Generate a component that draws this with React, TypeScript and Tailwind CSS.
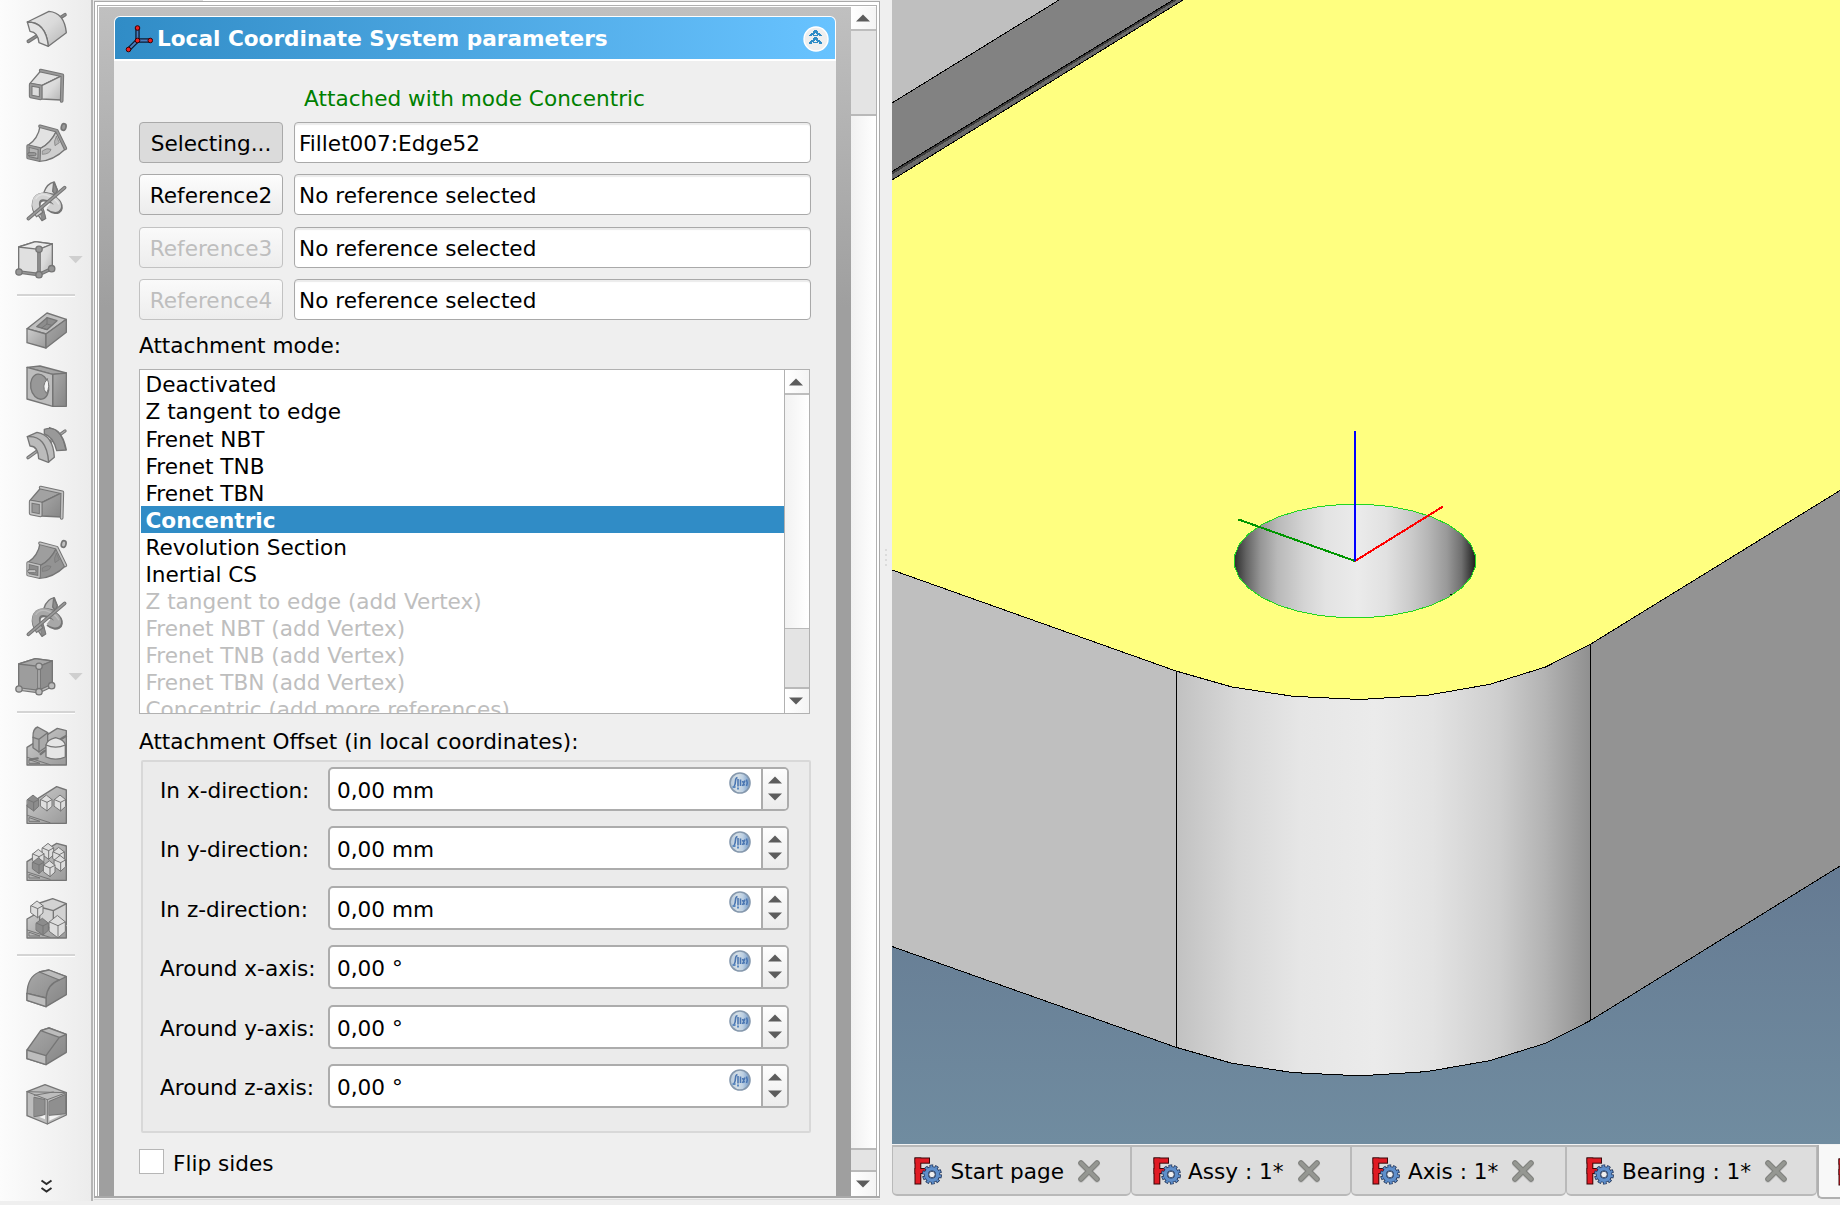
import React, { type ReactNode } from "react";

const INK = "#757575";

/* ---------- toolbar ---------- */

// Toolbar drawings use three units per pixel down the whole column.
function Tool({ top, h, children }: { top: number; h: number; children: ReactNode }) {
  return (
    <svg
      width="91"
      height={h}
      viewBox={`0 ${top * 3} 273 ${h * 3}`}
      className="block shrink-0"
      fill="none"
      stroke={INK}
      strokeWidth="4"
      strokeLinejoin="round"
      strokeLinecap="round"
    >
      {children}
    </svg>
  );
}

function ToolRule({ className }: { className: string }) {
  return (
    <div className={`shrink-0 pl-[17px] ${className}`}>
      <div className="h-[3px] w-[58px] border-b border-white bg-[#d4d4d4]" />
    </div>
  );
}

function Loft({ a, b, c, rim }: { a: string; b: string; c: string; rim: string }) {
  return (
    <>
      <path d="M90 250 L122 213 L186 227 L125 257Z" fill={a} />
      <path d="M125 257 L186 227 L184 300 L125 297Z" fill={b} />
      <path d="M122 212 L187 226 L185 303" stroke={INK} strokeWidth="11" />
      <path d="M122 212 L187 226 L185 303" stroke={rim} strokeWidth="5" />
      <path d="M92 254 L122 259 L122 295 L92 289Z" fill={c} strokeWidth="11" />
      <path d="M92 254 L122 259 L122 295 L92 289Z" stroke={rim} strokeWidth="5" />
    </>
  );
}

function Sweep({ a, b, c, rim }: { a: string; b: string; c: string; rim: string }) {
  return (
    <>
      <path d="M120 379 L170 392 Q152 430 122 445 L84 436 Q115 415 120 379Z" fill={a} />
      <path d="M170 392 L197 446 Q160 482 118 484 L120 446 Q152 430 170 392Z" fill={b} />
      <path d="M169 409 L178 428 L165 437 Q160 425 169 409Z M128 452 Q142 442 153 448 Q150 462 128 463Z" fill={c} strokeWidth="2" />
      <path d="M120 379 L170 392 L196 445" strokeWidth="11" />
      <path d="M120 379 L170 392 L196 445" stroke={rim} strokeWidth="5" />
      <path d="M84 438 L118 446 L117 480 L84 473Z" fill={c} strokeWidth="10" />
      <path d="M84 438 L118 446 L117 480 L84 473Z" stroke={rim} strokeWidth="4.5" />
      <rect x="83" y="458" width="25" height="9" rx="4" fill={rim} strokeWidth="3" />
      <ellipse cx="191" cy="381" rx="7" ry="10" transform="rotate(15 191 381)" fill={rim} strokeWidth="5" />
    </>
  );
}

function Helix({ a, b }: { a: string; b: string }) {
  const band = "M118 642 C98 614 106 589 128 588 C152 587 174 606 173 620 C172 629 158 627 146 617";
  return (
    <>
      <path d="M132 577 Q141 550 163 546 L172 570 L166 584 Z" fill={b} />
      <path d="M161 547 L172 570 L166 584 L158 574Z" fill="#8c8c8c" />
      <path d="M104 630 L126 662 L137 655 L128 622Z" fill={b} />
      <path d="M119 632 L126 661 L137 655 L131 630Z" fill="#8c8c8c" strokeWidth="2" />
      <path d={band} strokeWidth="27" strokeLinecap="butt" transform="translate(2 3)" />
      <path d={band} stroke={a} strokeWidth="20" strokeLinecap="butt" />
      <path d="M108 596 Q118 580 138 585 Q166 594 176 612" stroke={b} strokeWidth="4" />
      <path d="M85 656 L194 563" strokeWidth="11" />
      <path d="M85 656 L194 563" stroke="#9a9a9a" strokeWidth="4.5" />
    </>
  );
}

function Primitive({ a, b, c, rim }: { a: string; b: string; c: string; rim: string }) {
  return (
    <>
      <path d="M56 741 L106 725 L157 732 L157 804 L117 822 L56 815Z" fill={a} />
      <path d="M56 741 L106 725 L157 732 L117 748Z" fill={b} />
      <path d="M117 748 L157 732 L157 804 L117 822Z" fill={c} />
      <path d="M117 748 V823 M57 816 L117 824 L155 806" strokeWidth="11" />
      <path d="M117 748 V823 M57 816 L117 824 L155 806" stroke={rim} strokeWidth="4" />
      {[[117, 748], [57, 816], [117, 824], [155, 806]].map(([x, y]) => (
        <circle key={`${x}-${y}`} cx={x} cy={y} r="9.5" fill={rim} />
      ))}
      <path d="M206 768 H248 L227 790Z" fill="#cfcfcf" stroke="none" />
    </>
  );
}

function Cube({ x, y, s, dark }: { x: number; y: number; s: number; dark?: boolean }) {
  const w = s / 2;
  const d = s * 0.2;
  return (
    <g strokeWidth="3">
      <path
        d={`M${x - w} ${y - w + d} L${x} ${y - w - d} L${x + w} ${y - w + d} V${y + w - d} L${x + 2} ${y + w + d} L${x - w} ${y + w - d}Z`}
        fill={dark ? "#8c8c8c" : "#dedede"}
      />
      <path d={`M${x - w} ${y - w + d} L${x + 2} ${y - w + d * 2.2} L${x + w} ${y - w + d} M${x + 2} ${y - w + d * 2.2} V${y + w + d}`} />
    </g>
  );
}

function Ground({ y, d }: { y: number; d: string }) {
  return (
    <>
      <path d={d} fill="url(#tb-mid)" />
      <path d={`M82 ${y - 25} L150 ${y - 3} M88 ${y - 7} H120 L88 ${y - 18}Z`} strokeWidth="3" />
    </>
  );
}

function Toolbar() {
  return (
    <div className="flex h-[1201px] w-[91px] shrink-0 flex-col bg-linear-to-r from-[#fcfcfc] to-[#ececec]">
      <Tool top={0} h={58}>
        <defs>
          <linearGradient id="tb-light" x1="0" y1="0" x2="1" y2="1">
            <stop offset="0" stopColor="#e6e6e6" />
            <stop offset="0.5" stopColor="#dadada" />
            <stop offset="1" stopColor="#b4b4b4" />
          </linearGradient>
          <linearGradient id="tb-mid" x1="0" y1="0" x2="1" y2="1">
            <stop offset="0" stopColor="#cdcdcd" />
            <stop offset="1" stopColor="#9a9a9a" />
          </linearGradient>
          <linearGradient id="tb-dark" x1="0" y1="0" x2="1" y2="1">
            <stop offset="0" stopColor="#a9a9a9" />
            <stop offset="1" stopColor="#858585" />
          </linearGradient>
        </defs>
        <path d="M85 124 L115 105 M175 57 L195 44" strokeWidth="11" />
        <path d="M85 124 L115 105 M175 57 L195 44" stroke="#909090" strokeWidth="4" />
        <path d="M82 66 L147 34 Q193 38 199 98 L145 139 Q138 66 82 66Z" fill="url(#tb-light)" />
        <path d="M82 66 Q138 66 145 139 L117 128 Q114 96 90 94Z" fill="#e4e4e4" />
      </Tool>
      <Tool top={58} h={55}>
        <Loft a="#e2e2e2" b="url(#tb-light)" c="#dcdcdc" rim="#999999" />
      </Tool>
      <Tool top={113} h={59}>
        <Sweep a="#e2e2e2" b="#cfcfcf" c="#b5b5b5" rim="#999999" />
      </Tool>
      <Tool top={172} h={59}>
        <Helix a="#d2d2d2" b="#e2e2e2" />
      </Tool>
      <Tool top={231} h={57}>
        <Primitive a="#e0e0e0" b="#ececec" c="url(#tb-light)" rim="#969696" />
      </Tool>
      <ToolRule className="h-[16px] pt-[6px]" />
      <Tool top={304} h={53}>
        <path d="M81 986 L141 939 L199 958 L138 1002Z" fill="#c0c0c0" />
        <path d="M81 986 L138 1002 V1044 L81 1028Z" fill="url(#tb-mid)" />
        <path d="M138 1002 L199 958 V997 L138 1044Z" fill="url(#tb-dark)" />
        <path d="M110 980 L141 953 L171 962 L141 989Z" fill="#8d8d8d" />
        <path d="M141 953 V972 L125 984 L141 989 L155 976 L141 972" strokeWidth="3" />
      </Tool>
      <Tool top={357} h={60}>
        <path d="M81 1102 L120 1098 L199 1119 L158 1123Z" fill="#a5a5a5" />
        <path d="M158 1123 L199 1119 V1219 H158Z" fill="url(#tb-dark)" />
        <path d="M81 1102 L158 1123 V1219 L81 1197Z" fill="#bdbdbd" />
        <ellipse cx="119" cy="1160" rx="27" ry="38" fill="#989898" transform="rotate(-10 119 1160)" />
        <path d="M142 1137 Q122 1158 139 1180 Q152 1160 142 1137Z" fill="#f4f4f4" strokeWidth="3" />
      </Tool>
      <Tool top={417} h={58}>
        <path d="M84 1373 L195 1293" strokeWidth="10" />
        <path d="M84 1373 L195 1293" stroke="#a8a8a8" strokeWidth="4" />
        <path d="M133 1288 Q183 1272 199 1350 L170 1352 Q160 1310 133 1302Z" fill="#999" />
        <path d="M148 1282 Q187 1290 197 1348" strokeWidth="3" />
        <path d="M82 1310 L111 1297 Q160 1305 163 1372 L145 1387 L116 1376 Q114 1338 90 1338Z" fill="#bbb" />
        <path d="M82 1310 Q140 1305 146 1387" />
      </Tool>
      <Tool top={58} h={55}>
        <Loft a="#a2a2a2" b="url(#tb-dark)" c="#979797" rim="#c2c2c2" />
      </Tool>
      <Tool top={113} h={59}>
        <Sweep a="#9e9e9e" b="#939393" c="#8c8c8c" rim="#c2c2c2" />
      </Tool>
      <Tool top={173.3} h={59}>
        <Helix a="#a8a8a8" b="#bcbcbc" />
      </Tool>
      <Tool top={231} h={57}>
        <Primitive a="#9d9d9d" b="#a8a8a8" c="#8e8e8e" rim="#bcbcbc" />
      </Tool>
      <ToolRule className="h-[14px] pt-[6px]" />
      <Tool top={719} h={57}>
        <Ground y={2297} d="M81 2242 L172 2185 L199 2192 V2295 H81Z" />
        <path d="M99 2212 Q98 2186 113 2181 L143 2198 V2238 L117 2256 L99 2243Z" fill="#aaa" />
        <path d="M99 2212 L117 2218 L143 2198 M117 2218 V2256" />
        <path d="M90 2279 L113 2275 M122 2262 L135 2252 M178 2220 L198 2208" strokeWidth="7" />
        <path d="M138 2235 Q140 2220 167 2213 Q194 2220 196 2235 V2271 Q167 2284 138 2271Z" fill="#e6e6e6" />
        <path d="M138 2235 Q167 2248 196 2235" />
      </Tool>
      <Tool top={776} h={58}>
        <Ground y={2471} d="M81 2416 L170 2360 L199 2370 V2470 H81Z" />
        <Cube x={99} y={2409} s={34} dark />
        <Cube x={139} y={2409} s={34} />
        <Cube x={180} y={2409} s={34} />
      </Tool>
      <Tool top={834} h={56}>
        <Ground y={2641} d="M81 2585 L170 2530 L199 2538 V2641 H81Z" />
        <Cube x={144} y={2554} s={34} />
        <Cube x={115} y={2572} s={34} />
        <Cube x={176} y={2566} s={34} />
        <Cube x={180} y={2590} s={34} />
        <Cube x={115} y={2597} s={34} dark />
        <Cube x={148} y={2606} s={34} />
      </Tool>
      <Tool top={890} h={58}>
        <Ground y={2815} d="M81 2757 L120 2735 L199 2780 V2814 H81Z" />
        <path d="M119 2709 L158 2696 L199 2711 V2775 L160 2790 L119 2765Z" fill="#d2d2d2" />
        <path d="M119 2721 L160 2732 L199 2711 M160 2732 V2762" />
        <Cube x={111} y={2728} s={36} />
        <Cube x={127} y={2780} s={36} dark />
        <Cube x={172} y={2780} s={48} />
      </Tool>
      <ToolRule className="h-[14px] pt-[6px]" />
      <Tool top={962} h={56}>
        <path d="M81 2980 Q83 2930 118 2916 L147 2910 L199 2930 V2984 L138 3020 L81 3001Z" fill="url(#tb-dark)" />
        <path d="M118 2916 L147 2910 L199 2930 L178 2940Z" fill="#bcbcbc" />
        <path d="M81 2980 L138 2994 Q142 2952 178 2940 M138 2994 V3020" />
        <path d="M81 2980 L138 2994 V3020 L81 3001Z" fill="#bdbdbd" />
      </Tool>
      <Tool top={1018} h={57}>
        <path d="M81 3150 L122 3092 L147 3084 L199 3103 V3157 L138 3194 L81 3176Z" fill="url(#tb-dark)" />
        <path d="M122 3092 L147 3084 L199 3103 L178 3112Z" fill="#bcbcbc" />
        <path d="M138 3167 L178 3112" />
        <path d="M81 3150 L138 3167 V3194 L81 3176Z" fill="#bdbdbd" />
      </Tool>
      <Tool top={1075} h={60}>
        <path d="M81 3275 L135 3254 L199 3278 V3345 L142 3372 L81 3347Z" fill="#bdbdbd" />
        <path d="M103 3292 L135 3299 V3344 L103 3350Z M148 3304 L197 3283 V3341 L148 3346Z" fill="#8f8f8f" strokeWidth="3" />
        <path d="M81 3275 L142 3299 L199 3278 M142 3299 V3372 M81 3275 L199 3278 M103 3286 L160 3276" strokeWidth="3" />
        <path d="M118 3351 L135 3345 V3358Z M148 3348 L182 3346 L148 3362Z" fill="#f4f4f4" stroke="none" />
      </Tool>
      <div className="grow" />
      <svg width="91" height="22" viewBox="0 0 91 22" className="mb-[2px] block shrink-0" fill="none" stroke="#2b2b2b" strokeWidth="2">
        <path d="M41.5 3.5 L46.5 7 L51.5 3.5 M41.5 11 L46.5 14.5 L51.5 11" />
      </svg>
    </div>
  );
}

/* ---------- task panel ---------- */

function Arrow({ down }: { down?: boolean }) {
  return (
    <svg width="14" height="8" viewBox="0 0 14 8" className="block">
      <path d={down ? "M0 0.5 H14 L7 7.5Z" : "M0 7.5 H14 L7 0.5Z"} fill="#5c5c5c" />
    </svg>
  );
}

function AxesIcon() {
  return (
    <svg width="28" height="28" viewBox="0 0 28 28" className="block">
      <path d="M12.5 3 V15 M12.5 15.5 H25 M12.5 15.5 L3.5 24.5" stroke="#0c1b33" strokeWidth="4.4" />
      <path d="M12.5 3 V15 M12.5 15.5 H25 M12.5 15.5 L3.5 24.5" stroke="#4a7dbd" strokeWidth="1.8" />
      {[[12.5, 3], [12.5, 15.5], [25.3, 15.5], [3.5, 24.5]].map(([x, y]) => (
        <circle key={`${x}-${y}`} cx={x} cy={y} r="2.3" fill="#ef2020" stroke="#3c0000" strokeWidth="1" />
      ))}
    </svg>
  );
}

function CollapseIcon() {
  return (
    <svg width="26" height="26" viewBox="0 0 26 26" className="block">
      <circle cx="13" cy="13" r="12" fill="#efefef" stroke="#fff" strokeWidth="1.4" />
      <g fill="#308cc6" shapeRendering="crispEdges">
        {[4, 11].map((y) => (
          <g key={y}>
            <rect x="11" y={y} width="3" height="2" />
            <rect x="10" y={y + 1} width="5" height="2" />
            <rect x="8" y={y + 3} width="4" height="1" />
            <rect x="13" y={y + 3} width="4" height="1" />
            <rect x="7" y={y + 4} width="4" height="1" />
            <rect x="14" y={y + 4} width="4" height="1" />
            <rect x="6" y={y + 5} width="3" height="1" />
            <rect x="16" y={y + 5} width="3" height="1" />
            <rect x="10" y={y + 5} width="5" height="1" />
          </g>
        ))}
        <rect x="6" y="17" width="3" height="1" />
        <rect x="16" y="17" width="3" height="1" />
      </g>
    </svg>
  );
}

function ExpressionIcon() {
  return (
    <svg width="22" height="22" viewBox="0 0 22 22" className="block">
      <defs>
        <linearGradient id="fx" x1="0" y1="0" x2="1" y2="0">
          <stop offset="0" stopColor="#b3c6da" />
          <stop offset="0.35" stopColor="#d6e0e6" />
          <stop offset="0.65" stopColor="#bccfe2" />
          <stop offset="1" stopColor="#6f98c8" />
        </linearGradient>
      </defs>
      <circle cx="11" cy="11" r="10" fill="url(#fx)" stroke="#8598ad" strokeWidth="1.6" />
      <path
        d="M5 15 Q6.5 12 6.5 9 Q6.5 6 8.5 5.5 M9 7 V14.5 M11.5 7.5 V14 M13.5 9 L15.5 13.5 M16 8.5 L13.5 14 M17.5 7.5 Q19 11 17.5 14"
        fill="none"
        stroke="#4a76b2"
        strokeWidth="1.6"
      />
      <path d="M3.5 15 H6.5 M8 16.5 H10" fill="none" stroke="#5b88bf" strokeWidth="1.8" />
    </svg>
  );
}

type Ref = { label: string; value: string; state: "active" | "normal" | "disabled"; gap: string };

const refs: Ref[] = [
  { label: "Selecting...", value: "Fillet007:Edge52", state: "active", gap: "" },
  { label: "Reference2", value: "No reference selected", state: "normal", gap: "mt-[11px]" },
  { label: "Reference3", value: "No reference selected", state: "disabled", gap: "mt-[12px]" },
  { label: "Reference4", value: "No reference selected", state: "disabled", gap: "mt-[11px]" },
];

const buttonLook = {
  active: "border-[#a9a9a9] bg-[#dbdbdb] text-black",
  normal: "border-[#a9a9a9] bg-linear-to-b from-[#fdfdfd] to-[#ececec] text-black",
  disabled: "border-[#c2c2c2] bg-linear-to-b from-[#fafafa] to-[#ededed] text-[#bebebe]",
};

const modes = [
  "Deactivated",
  "Z tangent to edge",
  "Frenet NBT",
  "Frenet TNB",
  "Frenet TBN",
  "Concentric",
  "Revolution Section",
  "Inertial CS",
  "Z tangent to edge (add Vertex)",
  "Frenet NBT (add Vertex)",
  "Frenet TNB (add Vertex)",
  "Frenet TBN (add Vertex)",
  "Concentric (add more references)",
];

const offsets = [
  { label: "In x-direction:", value: "0,00 mm", gap: "" },
  { label: "In y-direction:", value: "0,00 mm", gap: "mt-[15px]" },
  { label: "In z-direction:", value: "0,00 mm", gap: "mt-[16px]" },
  { label: "Around x-axis:", value: "0,00 °", gap: "mt-[15px]" },
  { label: "Around y-axis:", value: "0,00 °", gap: "mt-[16px]" },
  { label: "Around z-axis:", value: "0,00 °", gap: "mt-[15px]" },
];

function ModeList() {
  return (
    <div className="flex h-[345px] w-[671px] border border-[#b1b1b1] bg-white">
      <div className="flex grow flex-col overflow-hidden pl-px">
        {modes.map((m, i) => (
          <div
            key={m}
            className={`shrink-0 whitespace-nowrap pt-px pl-[4.5px] leading-[27px] ${i === 1 ? "h-[28px]" : "h-[27px]"} ${
              i === 5 ? "bg-[#308cc6] font-bold text-white" : i > 7 ? "text-[#bebebe]" : "text-black"
            }`}
          >
            {m}
          </div>
        ))}
      </div>
      <div className="flex w-[25px] shrink-0 flex-col border-l border-[#b1b1b1] bg-linear-to-r from-[#f2f2f2] to-white">
        <div className="flex h-[25px] items-center justify-center border-b-2 border-[#bdbdbd] bg-linear-to-r from-white to-[#f4f4f4] pr-[2px]">
          <Arrow />
        </div>
        <div className="grow" />
        <div className="h-[61px] border-t border-b-2 border-[#b9b9b9] bg-[#e4e4e4]" />
        <div className="flex h-[24px] items-center justify-center bg-linear-to-r from-white to-[#f4f4f4] pr-[2px]">
          <Arrow down />
        </div>
      </div>
    </div>
  );
}

function TaskPanel() {
  return (
    <div className="ml-px flex h-[1205px] w-[786px] shrink-0 flex-col">
      <div className="flex h-px shrink-0">
        <div className="w-[109px] bg-[#dedede]" />
        <div className="w-[136px] bg-white" />
        <div className="grow bg-[#ececec]" />
      </div>
      <div className="flex h-[1197px] shrink-0 flex-col border border-b-2 border-[#a9a9a9] bg-white p-[2px] pt-[3px] pb-0">
        <div className="flex grow border border-b-0 border-[#b1b1b1] pt-px pl-px">
          <div className="flex grow flex-col bg-[linear-gradient(to_bottom,#c0c0c0,#9f9f9f_300px)] px-[15px] pt-[9px]">
            <div className="flex h-[45px] shrink-0 items-center rounded-t-[6px] border border-b-2 border-white bg-linear-to-r from-[#308cc6] to-[#68c3ff] pt-[2px] pl-[10px] pr-[6px]">
              <AxesIcon />
              <div className="ml-[4px] grow whitespace-nowrap text-[21.6px] font-bold leading-[30px] text-white">
                Local Coordinate System parameters
              </div>
              <CollapseIcon />
            </div>
            <div className="flex grow flex-col bg-[#efefef] pl-[25px] text-black">
              <div className="mt-[22px] h-[32px] w-[671px] text-center leading-[32px] text-[#008000]">
                Attached with mode Concentric
              </div>
              <div className="mt-[7px] flex flex-col">
                {refs.map((r) => (
                  <div key={r.label} className={`flex h-[41px] gap-[11px] ${r.gap}`}>
                    <div
                      className={`flex w-[144px] items-center justify-center rounded-[4px] border pt-[2px] ${buttonLook[r.state]}`}
                    >
                      {r.label}
                    </div>
                    <div className="flex w-[517px] items-center rounded-[4px] border border-[#a9a9a9] bg-white pt-[2px] pl-[4px] shadow-[inset_0_2px_1px_#ececec]">
                      {r.value}
                    </div>
                  </div>
                ))}
              </div>
              <div className="mt-[10px] h-[32px] leading-[32px]">Attachment mode:</div>
              <div className="mt-[7px] h-[345px]">
                <ModeList />
              </div>
              <div className="mt-[12px] h-[32px] leading-[32px]">Attachment Offset (in local coordinates):</div>
              <div className="mt-[2px] ml-[2px] h-[373px] w-[670px] rounded-[2px] border-2 border-[#d8d8d8] bg-[#ebebeb] pt-[5px] pl-[17px]">
                {offsets.map((o) => (
                  <div key={o.label} className={`flex h-[44px] ${o.gap}`}>
                    <div className="w-[168px] pt-px leading-[45px]">{o.label}</div>
                    <div className="flex w-[461px] rounded-[5px] border-2 border-[#acacac] bg-white">
                      <div className="grow pt-px pl-[7px] leading-[41px]">{o.value}</div>
                      <div className="pt-[3px] pr-[10px]">
                        <ExpressionIcon />
                      </div>
                      <div className="flex w-[26px] flex-col items-center gap-[9px] rounded-r-[3px] border-l-2 border-[#acacac] bg-linear-to-b from-[#fdfdfd] to-[#ececec] pt-[7px] pr-px">
                        <Arrow />
                        <Arrow down />
                      </div>
                    </div>
                  </div>
                ))}
              </div>
              <div className="mt-[16px] flex h-[25px] items-center gap-[9px]">
                <div className="h-[25px] w-[25px] border border-[#b6b6b6] bg-white" />
                <div className="pt-[5px]">Flip sides</div>
              </div>
            </div>
          </div>
          <div className="flex w-[25px] shrink-0 flex-col bg-linear-to-r from-[#f1f1f1] to-white">
            <div className="flex h-[24px] items-center justify-center border-b-2 border-[#bdbdbd] bg-linear-to-r from-white to-[#f4f4f4] pr-px">
              <Arrow />
            </div>
            <div className="h-[85px] border-b-2 border-[#b9b9b9] bg-[#e4e4e4]" />
            <div className="grow" />
            <div className="h-[24px] border-t-2 border-b-2 border-[#b9b9b9] bg-[#e4e4e4]" />
            <div className="flex h-[24px] items-center justify-center bg-linear-to-r from-white to-[#f4f4f4] pr-px">
              <Arrow down />
            </div>
          </div>
        </div>
      </div>
      <div className="mt-px h-px bg-[#dcdcdc]" />
    </div>
  );
}

/* ---------- 3D view ---------- */

const rim: [number, number][] = [
  [1176, 671], [1232, 687], [1293, 696.3], [1360, 699.5], [1427, 695.3], [1490, 684.3], [1545.5, 667], [1590, 644.5],
];
const DROP = 376.3;
const pts = (a: [number, number][], dy = 0) => a.map(([x, y]) => `${x},${y + dy}`).join(" ");

const holePts = Array.from({ length: 32 }, (_, i) => {
  const t = ((i + 0.5) * Math.PI) / 16;
  return `${(1355 + 121 * Math.sin(t)).toFixed(1)},${(561 - 57 * Math.cos(t)).toFixed(1)}`;
}).join(" ");

function Scene() {
  return (
    <svg width="948" height="1144" viewBox="892 0 948 1144" className="block shrink-0" shapeRendering="crispEdges">
      <defs>
        <linearGradient id="sky" gradientUnits="userSpaceOnUse" x1="0" y1="860" x2="0" y2="1144">
          <stop offset="0" stopColor="#657a92" />
          <stop offset="1" stopColor="#708ca0" />
        </linearGradient>
        <linearGradient id="corner" gradientUnits="userSpaceOnUse" x1="1176" y1="0" x2="1590" y2="0">
          <stop offset="0" stopColor="#c1c1c1" />
          <stop offset="0.15" stopColor="#d8d8d8" />
          <stop offset="0.3" stopColor="#e6e6e6" />
          <stop offset="0.48" stopColor="#ebebeb" />
          <stop offset="0.62" stopColor="#e3e3e3" />
          <stop offset="0.78" stopColor="#cecece" />
          <stop offset="0.89" stopColor="#b3b3b3" />
          <stop offset="1" stopColor="#909090" />
        </linearGradient>
        <linearGradient id="bore" gradientUnits="userSpaceOnUse" x1="1234" y1="0" x2="1476" y2="0">
          <stop offset="0" stopColor="#2c2c2c" />
          <stop offset="0.05" stopColor="#636363" />
          <stop offset="0.11" stopColor="#969696" />
          <stop offset="0.18" stopColor="#b9b9b9" />
          <stop offset="0.29" stopColor="#d4d4d4" />
          <stop offset="0.38" stopColor="#e3e3e3" />
          <stop offset="0.51" stopColor="#ebebeb" />
          <stop offset="0.63" stopColor="#e1e1e1" />
          <stop offset="0.73" stopColor="#cbcbcb" />
          <stop offset="0.8" stopColor="#b7b7b7" />
          <stop offset="0.88" stopColor="#999" />
          <stop offset="0.94" stopColor="#707070" />
          <stop offset="1" stopColor="#1c1c1c" />
        </linearGradient>
      </defs>
      <rect x="892" y="0" width="948" height="1144" fill="url(#sky)" />
      <polygon points="892,570 1176,671 1176,1047.3 892,946.5" fill="#bfbfbf" />
      <polygon points={`1590,644.5 1840,490.5 1840,866 1590,${644.5 + DROP}`} fill="#939393" />
      <polygon points={`${pts(rim)} ${pts([...rim].reverse(), DROP)}`} fill="url(#corner)" />
      <polygon points={`892,0 1840,0 1840,490.5 ${pts([...rim].reverse())} 892,570`} fill="#ffff80" />
      <polygon points="892,0 1184,0 892,180" fill="#6b6b6b" />
      <polygon points="892,0 1177,0 892,174.5" fill="#3c3c3c" />
      <polygon points="892,0 1173,0 892,171" fill="#828282" />
      <polygon points="892,0 1059,0 892,103" fill="#bfbfbf" />
      <g fill="none" stroke="#000" strokeWidth="1">
        <path d="M892 103 L1059 0 M892 171.5 L1173 0 M892 180 L1183 0" />
        <polyline points={`892,570 ${pts(rim)} 1840,490.5`} />
        <polyline points={`892,946.5 ${pts(rim, DROP)} 1840,866`} />
        <path d="M1176.5 671 V1047 M1590.5 644.5 V1020.5" />
      </g>
      <polygon points={holePts} fill="url(#bore)" stroke="#22d522" strokeWidth="1" />
      <rect x="1450" y="594" width="2" height="1" fill="#000" />
      <g fill="none" strokeWidth="2">
        <path d="M1355 561 L1238.5 519.5" stroke="#009600" />
        <path d="M1355 561 L1443 506.5" stroke="#f00" />
        <path d="M1355 561 V431" stroke="#00f" />
      </g>
    </svg>
  );
}

/* ---------- document tabs ---------- */

function AppIcon() {
  return (
    <svg width="28" height="28" viewBox="0 0 28 28" className="block shrink-0">
      <g fill="#3a0608">
        <rect x="0.5" y="0.5" width="6.8" height="27" />
        <rect x="0.5" y="0.5" width="15.5" height="6.2" />
        <rect x="0.5" y="11" width="12" height="6" />
      </g>
      <g fill="#e01b24">
        <rect x="1.5" y="1.5" width="4.8" height="25" />
        <rect x="1.5" y="1.5" width="13.5" height="4.2" />
        <rect x="1.5" y="12" width="10" height="4" />
      </g>
      <circle cx="18" cy="17.5" r="8.4" fill="none" stroke="#1f3358" strokeWidth="3.2" strokeDasharray="3.5 1.78" />
      <circle cx="18" cy="17.5" r="5.8" fill="none" stroke="#1f3358" strokeWidth="5" />
      <circle cx="18" cy="17.5" r="8.2" fill="none" stroke="#5f8fcb" strokeWidth="2" strokeDasharray="2.2 2.95" strokeDashoffset="-0.6" />
      <circle cx="18" cy="17.5" r="5.7" fill="none" stroke="#5f8fcb" strokeWidth="3.6" />
      <circle cx="18" cy="17.5" r="3.2" fill="#efefef" stroke="#1f3358" strokeWidth="0.8" />
    </svg>
  );
}

function CloseIcon() {
  return (
    <svg width="24" height="24" viewBox="0 0 24 24" className="block shrink-0" fill="none" strokeLinecap="round">
      <path d="M4 5 L20 21 M20 5 L4 21" stroke="#c9c9c9" strokeWidth="6" />
      <path d="M4 4 L20 20 M20 4 L4 20" stroke="#7f817d" strokeWidth="5.6" />
      <path d="M4 4 L20 20 M20 4 L4 20" stroke="#959792" strokeWidth="3.4" />
    </svg>
  );
}

const tabs = [
  { name: "Start page", w: "w-[239px]", pad: "pl-[21px] pr-[29.5px] gap-[8.5px]" },
  { name: "Assy : 1*", w: "w-[220px]", pad: "pl-[21px] pr-[29.5px] gap-[7px]" },
  { name: "Axis : 1*", w: "w-[215px]", pad: "pl-[20px] pr-[30.5px] gap-[8px]" },
  { name: "Bearing : 1*", w: "w-[251px]", pad: "pl-[19px] pr-[28.5px] gap-[8px]" },
];

function DocumentTabs() {
  return (
    <div className="flex h-[61px] shrink-0 items-start overflow-hidden border-t border-[#f3f3f3]">
      {tabs.map((t) => (
        <div
          key={t.name}
          className={`flex h-[51px] shrink-0 items-center rounded-b-[5px] border border-t-2 border-b-2 border-[#b9b9b9] bg-[#dddddd] ${t.w} ${t.pad}`}
        >
          <AppIcon />
          <div className="grow whitespace-nowrap pt-[3px]">{t.name}</div>
          <CloseIcon />
        </div>
      ))}
      <div className="flex h-[54px] w-[40px] shrink-0 rounded-bl-[5px] border-b-2 border-l-2 border-[#b0b0b0] bg-[#f8f8f8] pt-[13px] pl-[19px]">
        <AppIcon />
      </div>
    </div>
  );
}

export default function App() {
  return (
    <div className="flex h-[1205px] w-[1840px] overflow-hidden bg-[#efefef] font-['DejaVu_Sans',sans-serif] text-[21.6px] leading-[30px] text-black">
      <Toolbar />
      <div className="h-[1201px] w-[2px] shrink-0 bg-[#b4b4b4]" />
      <TaskPanel />
      <div className="flex w-[12px] shrink-0 flex-col items-center justify-center gap-[3px] pb-[90px]">
        {[0, 1, 2, 3].map((i) => (
          <div key={i} className="size-[2px] rounded-full bg-[#d5d5d5]" />
        ))}
      </div>
      <div className="flex w-[948px] shrink-0 flex-col">
        <Scene />
        <DocumentTabs />
      </div>
    </div>
  );
}
